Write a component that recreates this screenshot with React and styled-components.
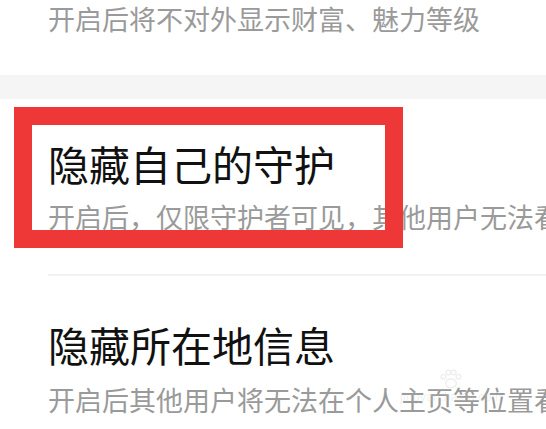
import React from "react";
import styled, { createGlobalStyle } from "styled-components";

const Global = createGlobalStyle`
  html, body { margin: 0; padding: 0; background: #ffffff; }
  body {
    font-family: "Noto Sans CJK SC", "Noto Sans", sans-serif;
    overflow: hidden;
  }
`;

const Page = styled.div`
  position: relative;
  width: 546px;
  height: 429px;
  overflow: hidden;
  background: #ffffff;
`;

const Item = styled.div`
  display: flex;
  flex-direction: column;
  padding: ${(p) => p.$pad};
  gap: ${(p) => p.$gap || 0}px;
`;

const Title = styled.div`
  padding-left: 48px;
  font-size: 41px;
  line-height: 48px;
  color: #111111;
  white-space: nowrap;
`;

const Desc = styled.div`
  padding-left: 48px;
  font-size: 27px;
  line-height: 32px;
  color: #9a9a9a;
  white-space: nowrap;
  overflow: hidden;
`;

const Band = styled.div`
  height: 24px;
  background: #f5f5f5;
`;

const Divider = styled.div`
  margin-left: 48px;
  height: 2px;
  background: #f2f2f2;
`;

const Highlight = styled.div`
  position: absolute;
  left: 14px;
  top: 107px;
  width: 389px;
  height: 141px;
  box-sizing: border-box;
  border: 18px solid #ee3838;
`;

const Watermark = styled.div`
  position: absolute;
  left: 400px;
  top: 368px;
  display: flex;
  flex-direction: column;
  align-items: center;
  opacity: 0.25;
  pointer-events: none;
`;

const WaterText = styled.span`
  font-family: "Liberation Sans", sans-serif;
  font-size: 12px;
  color: #c8c8c8;
  letter-spacing: 0.3px;
`;

export default function App() {
  return (
    <>
      <Global />
      <Page>
        <Item $pad="3px 0 40px 0">
          <Desc>开启后将不对外显示财富、魅力等级</Desc>
        </Item>
        <Band />
        <Item $pad="40px 0 41px 0" $gap={14}>
          <Title>隐藏自己的守护</Title>
          <Desc>开启后，仅限守护者可见，其他用户无法看到</Desc>
        </Item>
        <Divider />
        <Item $pad="44px 0 0 0" $gap={16}>
          <Title>隐藏所在地信息</Title>
          <Desc>开启后其他用户将无法在个人主页等位置看到</Desc>
        </Item>
        <Highlight />
        <Watermark>
          <svg width="26" height="22" viewBox="0 0 24 20" fill="none" stroke="#bbb" strokeWidth="1.2">
            <ellipse cx="12" cy="14" rx="5" ry="4" />
            <circle cx="5" cy="8" r="2.2" />
            <circle cx="9.5" cy="4" r="2.2" />
            <circle cx="14.5" cy="4" r="2.2" />
            <circle cx="19" cy="8" r="2.2" />
          </svg>
          <WaterText>jingyan.baidu.com</WaterText>
        </Watermark>
      </Page>
    </>
  );
}
